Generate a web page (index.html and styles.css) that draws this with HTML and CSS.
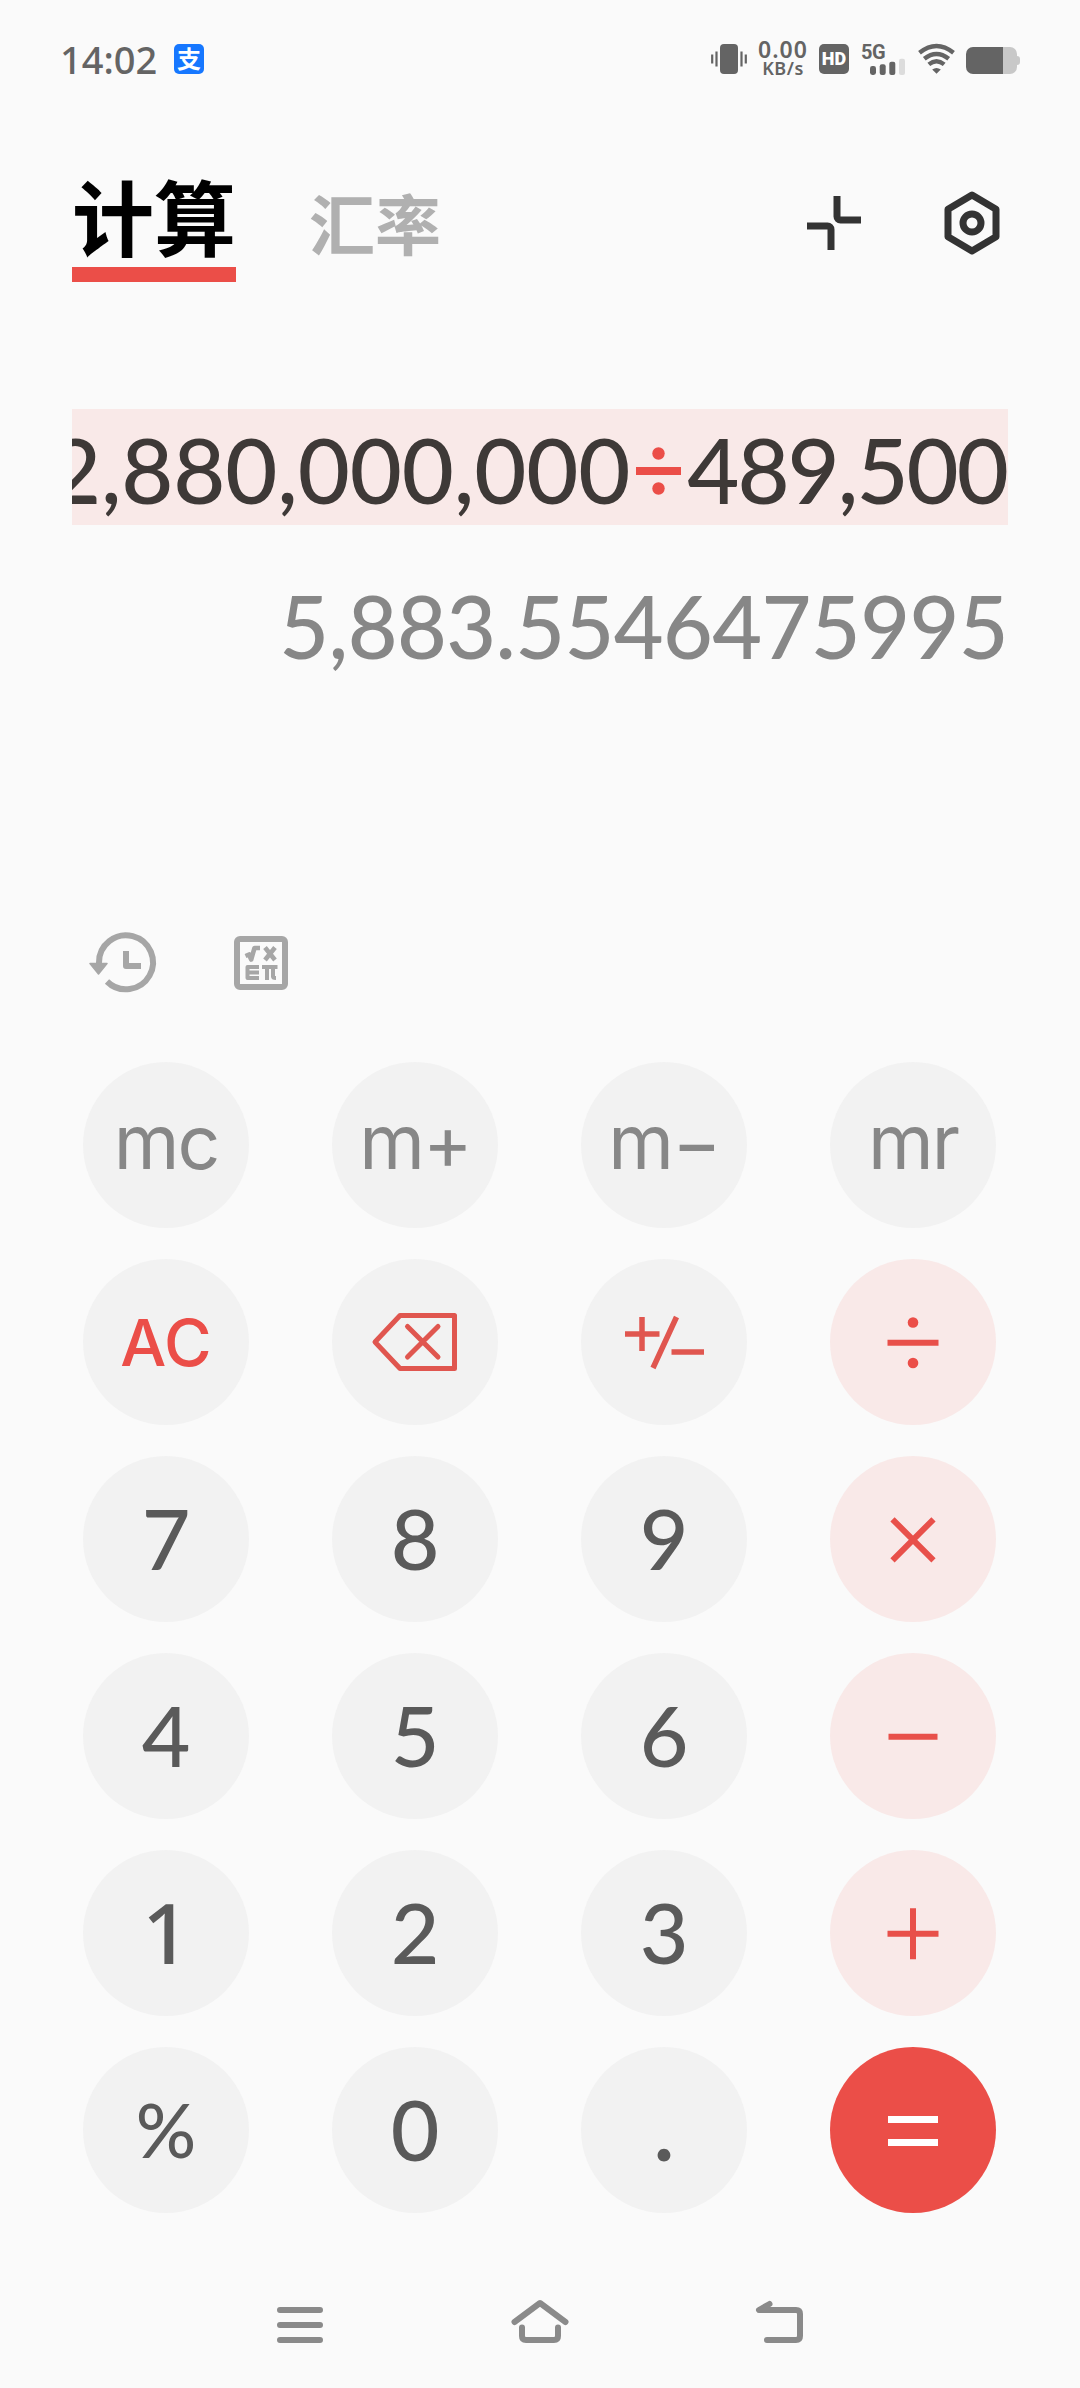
FILE: index.html
```html
<!DOCTYPE html>
<html lang="zh-CN">
<head>
    <meta charset="utf-8">
    <title>计算</title>
    <link rel="stylesheet" href="styles.css">
</head>
<body>
    <div class="status">
        <div class="clock">14:02</div>
        <div class="pay">支</div>
        <svg class="vibrate" width="36" height="30" viewBox="0 0 36 30">
            <rect x="9" y="0" width="18" height="30" rx="4"/>
            <path d="M1.2 10.5v9M5.5 7.5v15M30.5 7.5v15M34.8 10.5v9" fill="none" stroke="#646464" stroke-width="2.2"/>
        </svg>
        <div class="speed"><span class="rate">0.00</span><span class="unit">KB/s</span></div>
        <div class="hd">HD</div>
        <div class="signal">
            <span>5G</span>
            <svg width="36" height="17" viewBox="0 0 36 17">
                <rect x="0" y="8" width="6" height="9" rx="2.4"/>
                <rect x="9.7" y="6.3" width="6" height="10.7" rx="2.2"/>
                <rect x="19.3" y="3.7" width="6" height="13.3" rx="2"/>
                <rect x="29" y="0.7" width="6" height="16.3" rx="2" fill="#dcdcdc"/>
            </svg>
        </div>
        <svg class="wifi" width="37" height="30" viewBox="0 0 37 30" fill="none" stroke="#646464" stroke-width="4.400">
            <path d="M1.5 8.800Q18.500-4.800 35.500 8.800"/>
            <path d="M6.300 14.800Q18.500 5 30.700 14.800"/>
            <path d="M10.800 20.400Q18.500 14.200 26.200 20.400"/>
            <path d="M14.200 25.500Q18.500 22.300 22.800 25.500L18.500 29.800Z" fill="#646464" stroke="none"/>
        </svg>
        <svg class="battery" width="54" height="27" viewBox="0 0 54 27">
            <path d="M37 0h7a7 7 0 0 1 7 7v2a3 3 0 0 1 3 3v3a3 3 0 0 1-3 3v2a7 7 0 0 1-7 7h-7z" fill="#c8c8c8"/>
            <path d="M7 0h30v27H7a7 7 0 0 1-7-7V7a7 7 0 0 1 7-7z"/>
        </svg>
    </div>

    <div class="header">
        <div class="tab active">计算</div>
        <div class="tab">汇率</div>
        <svg class="shrink" width="54" height="54" viewBox="0 0 54 54" fill="none" stroke="#333" stroke-width="7">
            <path d="M30 0v20.500a3.500 3.500 0 0 0 3.500 3.500H54"/>
            <path d="M0 30h20.500a3.500 3.500 0 0 1 3.500 3.500V54"/>
        </svg>
        <svg class="settings" width="56" height="64" viewBox="0 0 56 64" fill="none" stroke="#333">
            <path d="M28 4L52 18.200V45.800L28 60L4 45.800V18.200Z" stroke-width="7" stroke-linejoin="round"/>
            <circle cx="28" cy="32" r="9" stroke-width="7"/>
        </svg>
    </div>

    <div class="expression"><span class="left">2,880,000,000</span><svg class="divide" width="45" height="48" viewBox="0 0 45 48"><path d="M0 24h45" stroke="#eb4e48" stroke-width="8"/><circle cx="22.500" cy="6.500" r="6.200"/><circle cx="22.500" cy="41.500" r="6.200"/></svg><span class="right">489,500</span></div>
    <div class="result">5,883.5546475995</div>

    <div class="tools">
        <svg width="68" height="62" viewBox="0 0 68 62" fill="none" stroke="#a6a6a6" stroke-width="6">
            <path d="M10 32V30.700A27 27 0 1 1 18 49.500"/>
            <path d="M37 19v15h15" stroke-linejoin="round"/>
            <path d="M1 31.500h17L9.500 42z" fill="#a6a6a6" stroke-width="1.500" stroke-linejoin="round"/>
        </svg>
        <svg width="54" height="54" viewBox="0 0 54 54" fill="none" stroke="#a6a6a6" stroke-linejoin="round">
            <rect x="3" y="3" width="48" height="48" rx="3" stroke-width="6"/>
            <path d="M11.500 20l3.500-1.500 2.200 5L20.500 12H26M31 11.500l10 12.500M41 11.500L31 24" stroke-width="4.600"/>
            <path d="M25 31H13.500V42H25M13.500 36.500H25M28 31H43.500M33 31V44M39 31V40.500Q39 42 42 42" stroke-width="4"/>
        </svg>
    </div>

    <div class="keys">
        <div class="key mem">mc</div>
        <div class="key mem">m+</div>
        <div class="key mem">m−</div>
        <div class="key mem">mr</div>

        <div class="key clear">AC</div>
        <div class="key icon">
            <svg width="86" height="60" viewBox="0 0 86 60" fill="none" stroke="#e0564f" stroke-width="5" stroke-linejoin="round">
                <path d="M3 30L28 3.500H82.500V56.500H28Z"/>
                <path d="M35.500 14.500L66 45M66 14.500L35.500 45" stroke-linecap="round"/>
            </svg>
        </div>
        <div class="key icon">
            <svg width="80" height="54" viewBox="0 0 80 54" fill="none" stroke="#e0564f" stroke-width="5.500">
                <path d="M1 19H35.500M18 2V36M52.500 2L29 53M47.500 37H80"/>
            </svg>
        </div>
        <div class="key op">
            <svg width="52" height="52" viewBox="0 0 52 52"><path d="M.5 26.800h51"/><circle cx="26" cy="6.500" r="5.300"/><circle cx="26" cy="47" r="5.300"/></svg>
        </div>

        <div class="key">7</div>
        <div class="key">8</div>
        <div class="key">9</div>
        <div class="key op">
            <svg width="52" height="52" viewBox="0 0 52 52"><path d="M5.500 6.300l41 41M46.500 6.300l-41 41"/></svg>
        </div>

        <div class="key">4</div>
        <div class="key">5</div>
        <div class="key">6</div>
        <div class="key op">
            <svg width="52" height="52" viewBox="0 0 52 52"><path d="M1.500 26.800h49"/></svg>
        </div>

        <div class="key one">1</div>
        <div class="key">2</div>
        <div class="key">3</div>
        <div class="key op">
            <svg width="52" height="52" viewBox="0 0 52 52"><path d="M.5 26.800h51M26 1.300v51"/></svg>
        </div>

        <div class="key percent">%</div>
        <div class="key">0</div>
        <div class="key dot">.</div>
        <div class="key equal">
            <svg width="52" height="52" viewBox="0 0 52 52"><path d="M1 15.500h50M1 38.500h50"/></svg>
        </div>
    </div>

    <div class="nav">
        <svg width="46" height="44" viewBox="0 0 46 44"><path d="M3 12h40M3 27h40M3 42h40"/></svg>
        <svg width="58" height="44" viewBox="0 0 58 44"><path d="M3.500 24L29 5l25.500 19M11 29.500V38q0 4 4 4h28q4 0 4-4v-8.500"/></svg>
        <svg width="48" height="44" viewBox="0 0 48 44"><path d="M13.500 6L3 12H40q4 0 4 4V38q0 4-4 4H11"/></svg>
    </div>
</body>
</html>
```
FILE: styles.css
```css
*{
    box-sizing:border-box;
}

body{
    margin:0;
    width:1080px;
    height:2388px;
    background:#fafafa;
    font-family:Lato,"Noto Sans CJK SC",sans-serif;
    overflow:hidden;
}

svg{
    display:block;
    flex:none;
    overflow:visible;
}

/* status bar */
.status{
    display:flex;
    align-items:center;
    height:118px;
    padding-left:60px;
    color:#646464;
    fill:#646464;
}
.clock{
    width:114px;
    padding-bottom:1px;
    font:500 38px/52px "Noto Sans",sans-serif;
    white-space:nowrap;
}
.pay{
    width:30px;
    height:30px;
    margin-right:507px;
    border-radius:5px;
    background:#1677ff;
    color:#fff;
    font-size:24px;
    font-weight:bold;
    line-height:29px;
    text-align:center;
}
.speed{
    display:flex;
    flex-direction:column;
    align-items:center;
    width:52px;
    margin:0 10px;
    padding-bottom:2px;
    font-family:"Noto Sans",sans-serif;
    font-weight:600;
}
.rate{
    font-size:23px;
    line-height:20px;
    letter-spacing:1px;
}
.unit{
    font-size:18px;
    line-height:18px;
    letter-spacing:0.5px;
}
.hd{
    width:30px;
    height:30px;
    border-radius:5px;
    background:#646464;
    color:#fff;
    font:900 18px/30px Roboto,sans-serif;
    text-align:center;
}
.signal{
    width:45px;
    height:31px;
    margin-left:12px;
    font:bold 20px/16px Roboto,sans-serif;
    letter-spacing:-0.5px;
}
.signal svg{
    margin-left:9px;
    margin-top:-2px;
}
.wifi{
    margin-left:12px;
}
.battery{
    margin-left:11px;
    margin-top:3px;
}

/* tabs */
.header{
    display:flex;
    align-items:center;
    height:210px;
    padding-left:72px;
}
.tab{
    width:132px;
    padding-bottom:5px;
    color:#b0b0b0;
    font:bold 66px/90px "Noto Sans CJK SC",sans-serif;
    white-space:nowrap;
}
.tab.active{
    width:164px;
    height:118px;
    margin-right:73px;
    padding:0;
    border-bottom:15px solid #eb4e48;
    color:#000;
    font-size:82px;
    line-height:102px;
}
.shrink{
    margin-left:366px;
}
.settings{
    margin-left:83px;
}

/* display */
.expression{
    display:flex;
    justify-content:flex-end;
    align-items:center;
    width:936px;
    height:116px;
    margin:81px 0 0 72px;
    padding-right:1px;
    overflow:hidden;
    background:#f9e9e8;
    color:#3e3937;
    font-size:90px;
    font-weight:500;
    line-height:116px;
    white-space:nowrap;
}
.expression span{
    padding-top:4px;
}
.left{
    letter-spacing:-0.2px;
}
.right{
    letter-spacing:-2px;
}
.divide{
    margin:8px 6px 0;
    fill:#eb4e48;
}
.result{
    width:936px;
    height:116px;
    margin:43px 0 0 72px;
    color:#878787;
    font-size:86px;
    font-weight:500;
    line-height:116px;
    letter-spacing:-0.6px;
    text-align:right;
}

.tools{
    display:flex;
    align-items:center;
    gap:77px;
    height:62px;
    margin:248px 0 0 89px;
}

/* keypad */
.keys{
    display:grid;
    grid-template-columns:repeat(4,166px);
    grid-auto-rows:166px;
    column-gap:83px;
    row-gap:31px;
    margin:68px 0 0 83px;
}
.key{
    display:flex;
    justify-content:center;
    align-items:center;
    padding-bottom:3px;
    border-radius:50%;
    background:#f2f2f2;
    color:#5a5a5a;
    font-size:84px;
    font-weight:500;
}
.key.mem{
    padding-bottom:8px;
    color:#878787;
    font:400 75px/1 Inter,sans-serif;
    letter-spacing:-2px;
}
.key.clear{
    padding:0;
    color:#eb4e48;
    font:500 65px/1 Inter,sans-serif;
}
.key.icon{
    padding:0;
}
.key.one{
    padding:0 0 4px;
    font-family:"Noto Sans",sans-serif;
}
.key.percent{
    padding-bottom:2px;
    font-size:75px;
}
.key.dot{
    font-weight:700;
}
.key.op{
    padding:0;
    background:#f9e9e8;
    fill:#eb4e48;
}
.op path, .equal path{
    fill:none;
    stroke:#e8504a;
    stroke-width:6;
}
.key.equal{
    padding:0;
    background:#eb4e48;
}
.equal path{
    stroke:#fff;
    stroke-width:7;
}

/* system navigation */
.nav{
    display:flex;
    justify-content:space-between;
    width:527px;
    margin:85px 0 0 277px;
}
.nav path{
    fill:none;
    stroke:#8a8a8a;
    stroke-width:6;
    stroke-linecap:round;
    stroke-linejoin:round;
}
```
